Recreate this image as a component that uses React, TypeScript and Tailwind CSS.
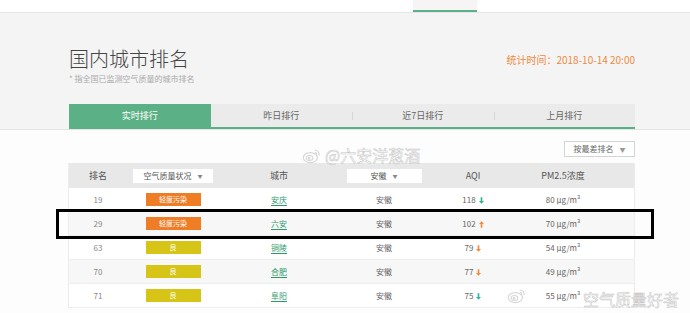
import React from 'react';

type Row = {
  rank: number;
  level: string;
  city: string;
  province: string;
  aqi: number;
  trend: 'up' | 'down';
  trendColor: string;
  pm: number;
};

const rows: Row[] = [
  { rank: 19, level: '轻度污染', city: '安庆', province: '安徽', aqi: 118, trend: 'down', trendColor: 'text-[#2fb58a]', pm: 80 },
  { rank: 29, level: '轻度污染', city: '六安', province: '安徽', aqi: 102, trend: 'up', trendColor: 'text-[#f08a3c]', pm: 70 },
  { rank: 63, level: '良', city: '铜陵', province: '安徽', aqi: 79, trend: 'down', trendColor: 'text-[#f08a3c]', pm: 54 },
  { rank: 70, level: '良', city: '合肥', province: '安徽', aqi: 77, trend: 'down', trendColor: 'text-[#f08a3c]', pm: 49 },
  { rank: 71, level: '良', city: '阜阳', province: '安徽', aqi: 75, trend: 'down', trendColor: 'text-[#2fb5b0]', pm: 55 },
];

const tabs = ['实时排行', '昨日排行', '近7日排行', '上月排行'];

const cols = 'grid grid-cols-[58px_92px_120px_90px_88px_92px_1fr] items-center';

function WeiboLogo({ className }: { className?: string }) {
  return (
    <svg viewBox="0 0 24 20" className={className} fill="none" stroke="currentColor" strokeWidth="1.3">
      <ellipse cx="10" cy="12.5" rx="8.5" ry="6" />
      <ellipse cx="9" cy="13" rx="4" ry="3" />
      <circle cx="8.5" cy="13.3" r="1" />
      <path d="M15 3.5a5 5 0 0 1 5.5 6" />
      <path d="M15.5 6.5a2.2 2.2 0 0 1 2.3 2.6" />
    </svg>
  );
}

function Arrow({ dir }: { dir: 'up' | 'down' }) {
  return (
    <svg viewBox="0 0 6 8" className="inline-block w-[5px] h-[7px] ml-[3px]" fill="currentColor">
      {dir === 'up' ? (
        <path d="M3 0 L6 3.5 L4 3.5 L4 8 L2 8 L2 3.5 L0 3.5 Z" />
      ) : (
        <path d="M3 8 L6 4.5 L4 4.5 L4 0 L2 0 L2 4.5 L0 4.5 Z" />
      )}
    </svg>
  );
}

export default function App() {
  return (
    <div
      className="relative w-[690px] h-[313px] overflow-hidden bg-[#fdfdfd] text-[#666]"
      style={{ fontFamily: '"Noto Sans CJK SC", "Noto Sans", sans-serif' }}
    >
      {/* top nav */}
      <header className="h-[13px] bg-white border-b border-[#e6e6e6] shadow-[0_1px_2px_rgba(0,0,0,0.06)] pl-[413px]">
        <div className="w-[64px] h-full bg-[#f6f4f5] border-b-2 border-[#5bb085]" />
      </header>

      {/* title area */}
      <section className="bg-[#f4f4f4] pr-[55px] pl-[69px] pt-[34px]">
        <div className="flex justify-between items-start">
          <div>
            <h1 className="text-[20px] leading-[24px] text-[#444] font-light">国内城市排名</h1>
            <p className="mt-[3px] text-[8px] leading-[10px] text-[#aaa]">* 指全国已监测空气质量的城市排名</p>
          </div>
          <p className="mt-[7px] text-[10px] leading-[12px] text-[#ee8a3f]">统计时间：2018-10-14 20:00</p>
        </div>
        <div className="mt-[20px] grid grid-cols-4 border-b-2 border-[#5bb085]">
          {tabs.map((t, i) => (
            <div
              key={t}
              className={
                i === 0
                  ? 'h-[23px] flex items-center justify-center bg-[#5bb085] text-white text-[9px]'
                  : 'h-[23px] flex items-center justify-center bg-[#ebebeb] text-[#666] text-[9px] relative'
              }
            >
              {i > 1 && <span className="absolute left-0 top-[8px] h-[8px] border-l border-[#d6d6d6]" />}
              {t}
            </div>
          ))}
        </div>
      </section>

      {/* table area */}
      <section className="border-t border-[#e4e4e4] pl-[68px] pr-[55px] pt-[11px]">
        <div className="flex justify-end">
          <div className="w-[71px] h-[16px] bg-white border border-[#d4d4d4] flex items-center justify-center gap-[6px] text-[8px] text-[#666]">
            按最差排名 <span className="text-[6px] text-[#999]">▼</span>
          </div>
        </div>
        <div className="mt-[6px] border-l border-r border-[#ececec]">
          <div className={`${cols} h-[25px] bg-[#e8e8e8] text-[9px] text-[#555]`}>
            <span className="text-center">排名</span>
            <span className="flex justify-center">
              <span className="w-[80px] h-[14px] bg-white flex items-center justify-center gap-[6px] text-[8px]">
                空气质量状况 <span className="text-[5px] text-[#888]">▼</span>
              </span>
            </span>
            <span className="text-center">城市</span>
            <span className="flex justify-center">
              <span className="w-[75px] h-[14px] bg-white flex items-center justify-center gap-[6px] text-[8px]">
                安徽 <span className="text-[5px] text-[#888]">▼</span>
              </span>
            </span>
            <span className="text-center">AQI</span>
            <span className="text-center">PM2.5浓度</span>
            <span />
          </div>
          {rows.map((r, i) => (
            <div
              key={r.rank}
              className={`${cols} h-[24px] border-b border-[#eeeeee] text-[8px] ${i % 2 === 1 ? 'bg-[#f7f7f7]' : 'bg-white'}`}
            >
              <span className="text-center text-[#888]">{r.rank}</span>
              <span className="flex justify-center">
                <span
                  className={`w-[55px] h-[13px] flex items-center justify-center text-white text-[7px] ${
                    r.level === '良' ? 'bg-[#d6c517]' : 'bg-[#ef7d25]'
                  }`}
                >
                  {r.level}
                </span>
              </span>
              <span className="text-center text-[#2e9a6c] underline underline-offset-2">{r.city}</span>
              <span className="text-center">{r.province}</span>
              <span className="text-center">
                {r.aqi}
                <span className={r.trendColor}>
                  <Arrow dir={r.trend} />
                </span>
              </span>
              <span className="text-center">{r.pm} μg/m³</span>
              <span />
            </div>
          ))}
        </div>
      </section>

      {/* highlight annotation */}
      <div className="absolute left-[56px] top-[209px] w-[598px] h-[30px] border-[3px] border-black pointer-events-none" />

      {/* watermarks */}
      <div className="absolute left-[302px] top-[146px] flex items-center gap-[3px] text-[#d6d6d6] pointer-events-none">
        <WeiboLogo className="w-[20px] h-[17px]" />
        <span className="text-[16px] leading-[18px] text-white/80 [-webkit-text-stroke:0.5px_#c4c4c4]">@六安洋葱酒</span>
      </div>
      <div className="absolute left-[507px] top-[287px] text-[#d6d6d6] pointer-events-none">
        <WeiboLogo className="w-[20px] h-[17px]" />
      </div>
      <div className="absolute left-[583px] top-[287px] pointer-events-none">
        <span className="text-[16px] leading-[18px] text-white/80 [-webkit-text-stroke:0.5px_#c4c4c4]">空气质量好者</span>
      </div>
    </div>
  );
}
